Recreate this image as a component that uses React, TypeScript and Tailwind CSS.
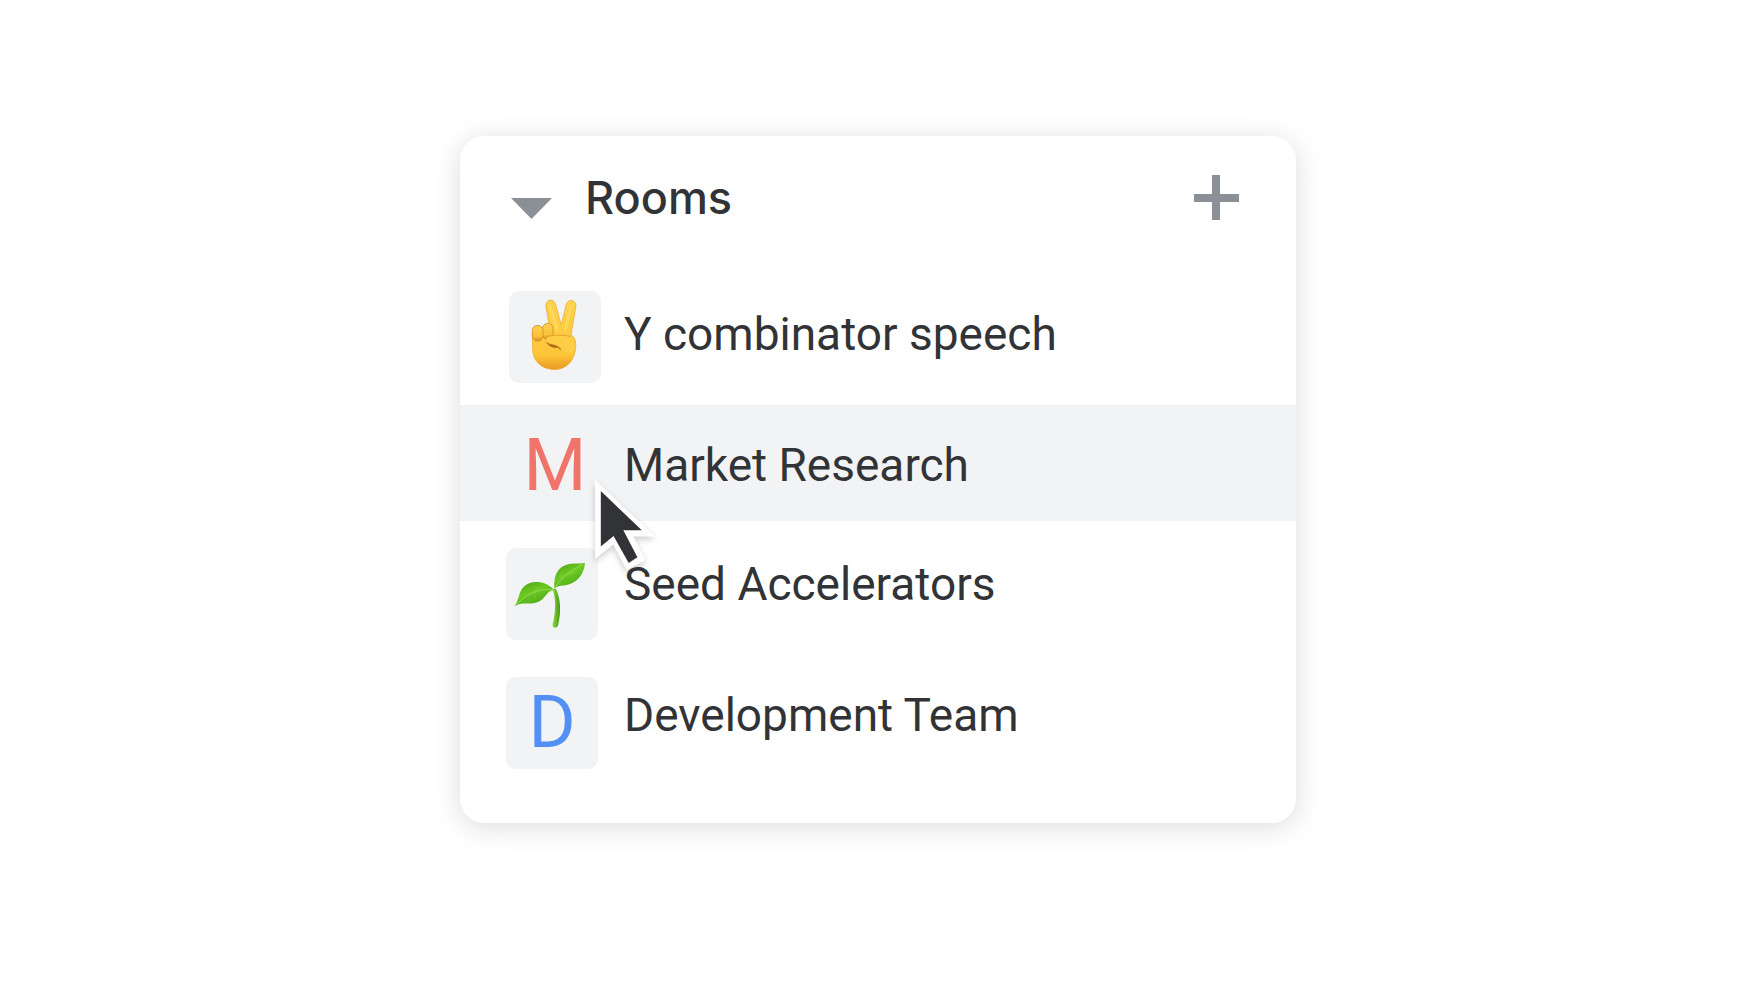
import type { ReactNode } from "react";

type Room = {
  name: string;
  icon: ReactNode;
  active?: boolean;
  rowClass: string;
  iconClass: string;
  labelClass: string;
};

function VictoryHand() {
  return (
    <svg viewBox="0 0 92 92" className="size-full" aria-hidden="true">
      <defs>
        <linearGradient id="skin" gradientUnits="userSpaceOnUse" x1="0" y1="8" x2="0" y2="78">
          <stop offset="0" stopColor="#ffd34d" />
          <stop offset="0.8" stopColor="#fdc538" />
          <stop offset="1" stopColor="#e99a22" />
        </linearGradient>
        <linearGradient id="knuckle" x1="0" y1="0" x2="0" y2="1">
          <stop offset="0" stopColor="#ffd14c" />
          <stop offset="0.7" stopColor="#fac23a" />
          <stop offset="1" stopColor="#d98d1e" />
        </linearGradient>
      </defs>
      {/* both raised fingers and the palm */}
      <path
        d="M37 16C35.500 8.500 44.500 6.500 46.500 13L52.300 34L57.200 13.500C59 7 68 8.500 66.800 16L62 44C65.500 46 67 49.500 66.800 54C66.500 69 58 78.500 45.500 78.500C32 78.500 23.500 69.500 23.500 57L23.500 43L40.500 37Z"
        fill="url(#skin)"
        stroke="#eba92c"
        strokeWidth="0.700"
      />
      <path d="M40.500 15L48 38" stroke="#ffdf70" strokeWidth="3" strokeLinecap="round" opacity="0.600" />
      <path d="M62 15L56.500 38" stroke="#ffdf70" strokeWidth="3" strokeLinecap="round" opacity="0.600" />
      <rect x="33.500" y="32.500" width="10.500" height="16" rx="5" fill="url(#knuckle)" stroke="#d08c20" strokeWidth="0.800" />
      <rect x="23.300" y="34.500" width="10.700" height="15.500" rx="5" fill="url(#knuckle)" stroke="#d08c20" strokeWidth="0.800" />
      {/* thumb folded over the palm */}
      <path
        d="M41 45C47 44.500 55 44 61 45.500C66 48 67 56 63.500 62C59 64 54 61 52.500 57C50 54 45 55 40 53.500C35.500 51.500 36.500 46 41 45Z"
        fill="#ffcd46"
      />
      <path d="M38.500 45.500C44 44 55 43.500 61 45.500" fill="none" stroke="#dda02e" strokeWidth="0.900" strokeLinecap="round" />
      <path d="M37.500 51.500C42 55 48.500 52.500 51.500 59C50.500 54.500 49 57 46 56.500C42.500 56 39.500 54.500 37.500 51.500Z" fill="#a8660f" stroke="#b8761a" strokeWidth="0.800" />
    </svg>
  );
}

function Seedling() {
  return (
    <svg viewBox="0 0 92 92" className="size-full" aria-hidden="true">
      <defs>
        <linearGradient id="leaf" x1="0" y1="0" x2="0.600" y2="1">
          <stop offset="0" stopColor="#47a012" />
          <stop offset="0.500" stopColor="#6cc922" />
          <stop offset="1" stopColor="#4da51a" />
        </linearGradient>
        <linearGradient id="stem" x1="0" y1="0" x2="1" y2="0">
          <stop offset="0" stopColor="#8fdc3c" />
          <stop offset="1" stopColor="#459413" />
        </linearGradient>
      </defs>
      <path d="M46.500 41C50.500 52 49.500 65 46.500 77C46.500 80.500 51 80.500 52 77.500C55.500 63 54.500 51 50 41Z" fill="url(#stem)" />
      <path d="M48.500 41C47.500 31 49.500 22.500 57.500 18C64 14.500 71 16 79 15C78 26 72 33 64 36C57 38.500 52.500 36.500 48.500 41Z" fill="url(#leaf)" />
      <path d="M48 42C41 34 30 32 21.500 36C12.500 41 14 49 9 58C17.500 53 25 58 34 53C40 49 41 43 48 42Z" fill="url(#leaf)" />
      <path d="M48.500 41C54 30 63 24 77 16" fill="none" stroke="#98df58" strokeWidth="0.900" />
      <path d="M48 42C33 40 22 45 11 56" fill="none" stroke="#98df58" strokeWidth="0.900" />
      <path d="M56 31L55 24M62 26L69 24M34 42L28 38M29 44L29 50" fill="none" stroke="#98df58" strokeWidth="0.700" opacity="0.500" />
    </svg>
  );
}

function Cursor() {
  return (
    <svg
      viewBox="0 0 178 268"
      className="absolute left-full top-full z-10 -ml-1.5 -mt-8 h-[90px] w-[60px] overflow-visible drop-shadow-[0_3px_3px_rgba(0,0,0,0.2)]"
      aria-hidden="true"
    >
      <path d="M0 0L178 168H114L150 238L94 268L54 192L0 235Z" fill="#fff" />
      <path d="M17 33L139 150H84L126 230L100 247L55 167L17 198Z" fill="#323336" />
    </svg>
  );
}

const rooms: Room[] = [
  {
    name: "Y combinator speech",
    icon: <VictoryHand />,
    rowClass: "h-[136px]",
    iconClass: "pl-[49px]",
    labelClass: "pb-1.5",
  },
  {
    name: "Market Research",
    icon: <span className="text-[#f1746a]">M</span>,
    active: true,
    rowClass: "h-[116px] bg-[#f2f3f5]",
    iconClass: "pl-[49px] pt-1.5",
    labelClass: "pt-1",
  },
  {
    name: "Seed Accelerators",
    icon: <Seedling />,
    rowClass: "h-[146px]",
    iconClass: "pl-[46px]",
    labelClass: "pb-5",
  },
  {
    name: "Development Team",
    icon: <span className="text-[#5290f5]">D</span>,
    rowClass: "h-[112px]",
    iconClass: "pl-[46px]",
    labelClass: "pb-4",
  },
];

export default function App() {
  return (
    <main className="min-h-screen bg-white px-6 pt-[136px] font-['Roboto',sans-serif] text-[#323336]">
      <section className="mx-auto max-w-[836px] rounded-3xl bg-white pb-11 shadow-[0_4px_28px_rgba(0,0,0,0.14)]">
        <header className="mb-2.5 flex h-[123px] items-center justify-between pl-[51px] pr-14">
          <button type="button" aria-expanded="true" className="flex items-center gap-8">
            <svg viewBox="0 0 42 42" className="size-[42px]" aria-hidden="true">
              <path d="M0 21H41L20.500 42Z" fill="#8b9097" />
            </svg>
            <span className="font-['Inter',sans-serif] text-[45px] font-medium">Rooms</span>
          </button>
          <button type="button" aria-label="Add room">
            <svg viewBox="0 0 46 46" className="size-[46px]" aria-hidden="true">
              <path d="M18 0H26V19H45V27H26V45H18V27H0V19H18Z" fill="#8b9097" />
            </svg>
          </button>
        </header>

        <ul>
          {rooms.map((room) => (
            <li key={room.name}>
              <a
                href="#"
                aria-current={room.active ? "page" : undefined}
                className={`flex items-center ${room.rowClass}`}
              >
                <span className={`w-[164px] shrink-0 ${room.iconClass}`}>
                  <span className="relative flex size-[92px] items-center justify-center rounded-[10px] bg-[#f2f3f5] text-[72px] leading-none">
                    {room.icon}
                    {room.active && <Cursor />}
                  </span>
                </span>
                <span className={`relative z-20 text-[46px] ${room.labelClass}`}>{room.name}</span>
              </a>
            </li>
          ))}
        </ul>
      </section>
    </main>
  );
}
